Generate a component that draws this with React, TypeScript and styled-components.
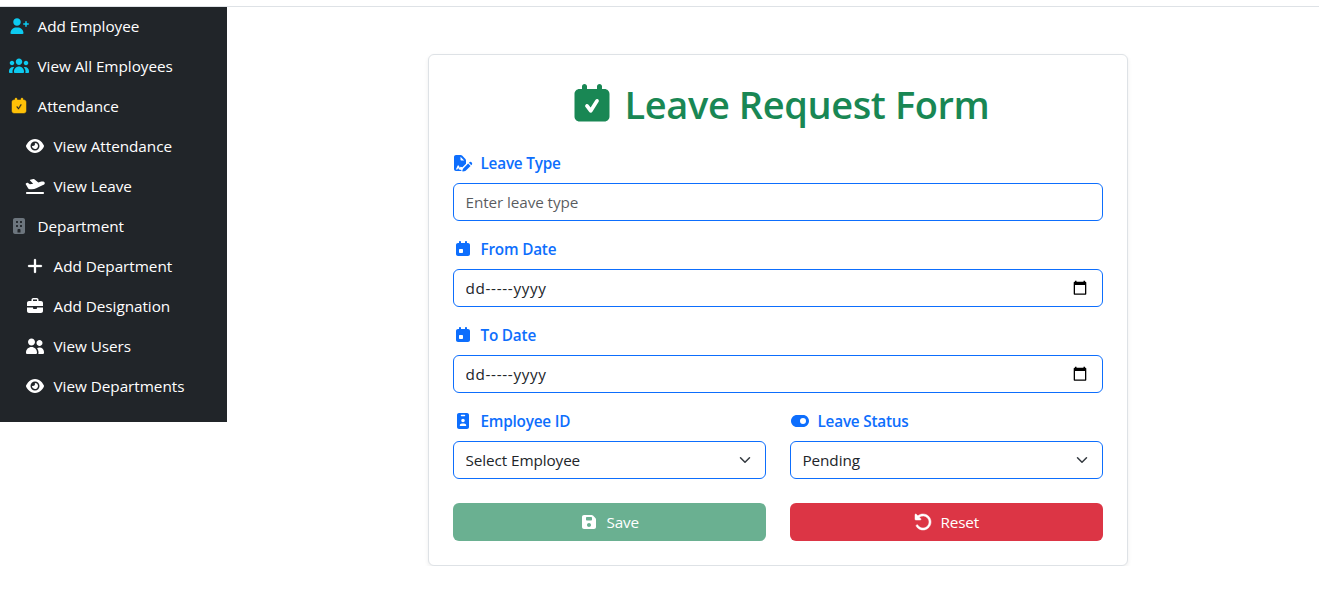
import React from "react";
import styled, { createGlobalStyle } from "styled-components";
import { FaToggleOn } from "react-icons/fa6";

const GlobalStyle = createGlobalStyle`
  *, *::before, *::after { box-sizing: border-box; }
  body {
    margin: 0;
    background: #fff;
    color: #212529;
    font-family: "Open Sans", "Noto Sans", sans-serif;
    font-size: 15.3px;
    line-height: 24px;
    letter-spacing: -0.1px;
  }
`;

const paths = {
  userPlus:
    "M136 192C136 125.7 189.7 72 256 72C322.3 72 376 125.7 376 192C376 258.3 322.3 312 256 312C189.7 312 136 258.3 136 192zM48 546.3C48 447.8 127.8 368 226.3 368L285.7 368C384.2 368 464 447.8 464 546.3C464 562.7 450.7 576 434.3 576L77.7 576C61.3 576 48 562.7 48 546.3zM544 160C557.3 160 568 170.7 568 184L568 232L616 232C629.3 232 640 242.7 640 256C640 269.3 629.3 280 616 280L568 280L568 328C568 341.3 557.3 352 544 352C530.7 352 520 341.3 520 328L520 280L472 280C458.7 280 448 269.3 448 256C448 242.7 458.7 232 472 232L520 232L520 184C520 170.7 530.7 160 544 160z",
  users:
    "M320 80C377.4 80 424 126.6 424 184C424 241.4 377.4 288 320 288C262.6 288 216 241.4 216 184C216 126.6 262.6 80 320 80zM96 152C135.8 152 168 184.2 168 224C168 263.8 135.8 296 96 296C56.2 296 24 263.8 24 224C24 184.2 56.2 152 96 152zM0 480C0 409.3 57.3 352 128 352C140.8 352 153.2 353.9 164.9 357.4C132 394.2 112 442.8 112 496L112 512C112 523.4 114.4 534.2 118.7 544L32 544C14.3 544 0 529.7 0 512L0 480zM521.3 544C525.6 534.2 528 523.4 528 512L528 496C528 442.8 508 394.2 475.1 357.4C486.8 353.9 499.2 352 512 352C582.7 352 640 409.3 640 480L640 512C640 529.7 625.7 544 608 544L521.3 544zM472 224C472 184.2 504.2 152 544 152C583.8 152 616 184.2 616 224C616 263.8 583.8 296 544 296C504.2 296 472 263.8 472 224zM160 496C160 407.6 231.6 336 320 336C408.4 336 480 407.6 480 496L480 512C480 529.7 465.7 544 448 544L192 544C174.3 544 160 529.7 160 512L160 496z",
  calendarCheck:
    "M224 64C241.7 64 256 78.3 256 96L256 128L384 128L384 96C384 78.3 398.3 64 416 64C433.7 64 448 78.3 448 96L448 128L480 128C515.3 128 544 156.7 544 192L544 480C544 515.3 515.3 544 480 544L160 544C124.7 544 96 515.3 96 480L96 192C96 156.7 124.7 128 160 128L192 128L192 96C192 78.3 206.3 64 224 64zM404.4 292.7C411.5 281.5 408.1 266.8 396.8 259.7C385.5 252.6 370.7 256.1 363.7 267.3L302.3 365.6L275.3 329.6C267.3 319 252.3 316.8 241.7 324.8C231.1 332.8 228.9 347.8 236.9 358.4L284.9 422.4C289.6 428.8 297.2 432.4 305.1 432C313 431.6 320.2 427.4 324.4 420.7L404.4 292.7z",
  calendarDay:
    "M224 64C241.7 64 256 78.3 256 96L256 128L384 128L384 96C384 78.3 398.3 64 416 64C433.7 64 448 78.3 448 96L448 128L480 128C515.3 128 544 156.7 544 192L544 480C544 515.3 515.3 544 480 544L160 544C124.7 544 96 515.3 96 480L96 192C96 156.7 124.7 128 160 128L192 128L192 96C192 78.3 206.3 64 224 64zM224 320C206.3 320 192 334.3 192 352L192 416C192 433.7 206.3 448 224 448L288 448C305.7 448 320 433.7 320 416L320 352C320 334.3 305.7 320 288 320L224 320z",
  eye:
    "M320 96C239.2 96 174.5 132.8 127.4 176.6C80.6 220.1 49.3 272 34.4 307.7C31.1 315.6 31.1 324.4 34.4 332.3C49.3 368 80.6 420 127.4 463.4C174.5 507.1 239.2 544 320 544C400.8 544 465.5 507.2 512.6 463.4C559.4 419.9 590.7 368 605.6 332.3C608.9 324.4 608.9 315.6 605.6 307.7C590.7 272 559.4 220 512.6 176.6C465.5 132.9 400.8 96 320 96zM176 320C176 240.5 240.5 176 320 176C399.5 176 464 240.5 464 320C464 399.5 399.5 464 320 464C240.5 464 176 399.5 176 320zM320 256C320 291.3 291.3 320 256 320C244.5 320 233.7 317 224.3 311.6C223.3 322.5 224.2 333.7 227.2 344.8C240.9 396 293.6 426.4 344.8 412.7C396 399 426.4 346.3 412.7 295.1C400.5 249.4 357.2 220.3 311.6 224.3C316.9 233.6 320 244.4 320 256z",
  planeDeparture:
    "M170 116L262 94C276 91 288 94 300 103L426 204L500 182C560 164 622 170 632 214C640 250 612 274 576 290L360 392C320 410 270 420 220 420L150 420C132 420 116 412 104 398L24 262C16 248 22 236 36 230L70 216C80 212 90 214 98 220L156 266L262 246L160 142C152 134 156 120 170 116zM64 512L576 512C594 512 608 526 608 544C608 562 594 576 576 576L64 576C46 576 32 562 32 544C32 526 46 512 64 512z",
  building:
    "M192 64C156.7 64 128 92.7 128 128L128 512C128 547.3 156.7 576 192 576L448 576C483.3 576 512 547.3 512 512L512 128C512 92.7 483.3 64 448 64L192 64zM304 416L336 416C353.7 416 368 430.3 368 448L368 528L272 528L272 448C272 430.3 286.3 416 304 416zM224 176C224 167.2 231.2 160 240 160L272 160C280.8 160 288 167.2 288 176L288 208C288 216.8 280.8 224 272 224L240 224C231.2 224 224 216.8 224 208L224 176zM368 160L400 160C408.8 160 416 167.2 416 176L416 208C416 216.8 408.8 224 400 224L368 224C359.2 224 352 216.8 352 208L352 176C352 167.2 359.2 160 368 160zM224 304C224 295.2 231.2 288 240 288L272 288C280.8 288 288 295.2 288 304L288 336C288 344.8 280.8 352 272 352L240 352C231.2 352 224 344.8 224 336L224 304zM368 288L400 288C408.8 288 416 295.2 416 304L416 336C416 344.8 408.8 352 400 352L368 352C359.2 352 352 344.8 352 336L352 304C352 295.2 359.2 288 368 288z",
  plus:
    "M352 128C352 110.3 337.7 96 320 96C302.3 96 288 110.3 288 128L288 288L128 288C110.3 288 96 302.3 96 320C96 337.7 110.3 352 128 352L288 352L288 512C288 529.7 302.3 544 320 544C337.7 544 352 529.7 352 512L352 352L512 352C529.7 352 544 337.7 544 320C544 302.3 529.7 288 512 288L352 288L352 128z",
  briefcase:
    "M264 112L376 112C380.4 112 384 115.6 384 120L384 160L256 160L256 120C256 115.6 259.6 112 264 112zM208 120L208 160L128 160C92.7 160 64 188.7 64 224L64 320L576 320L576 224C576 188.7 547.3 160 512 160L432 160L432 120C432 89.1 406.9 64 376 64L264 64C233.1 64 208 89.1 208 120zM576 368L384 368L384 384C384 401.7 369.7 416 352 416L288 416C270.3 416 256 401.7 256 384L256 368L64 368L64 480C64 515.3 92.7 544 128 544L512 544C547.3 544 576 515.3 576 480L576 368z",
  userGroup:
    "M96 192C96 130.1 146.1 80 208 80C269.9 80 320 130.1 320 192C320 253.9 269.9 304 208 304C146.1 304 96 253.9 96 192zM32 528C32 430.8 110.8 352 208 352C305.2 352 384 430.8 384 528L384 534C384 557.2 365.2 576 342 576L74 576C50.8 576 32 557.2 32 534L32 528zM464 128C517 128 560 171 560 224C560 277 517 320 464 320C411 320 368 277 368 224C368 171 411 128 464 128zM464 368C543.5 368 608 432.5 608 512L608 534.4C608 557.4 589.4 576 566.4 576L421.6 576C428.2 563.5 432 549.2 432 534L432 528C432 476.5 414.6 429.1 385.5 391.3C408.1 376.6 435.1 368 464 368z",
  fileSignature:
    "M96 64C60.700 64 32 92.700 32 128L32 512C32 547.300 60.700 576 96 576L262 576L272 540L190 528L168 476L140 528L92 528L150 400L188 400L214 472L246 440L300 456L416 340L416 234.500C416 217.500 409.300 201.200 397.300 189.200L290.700 82.700C278.700 70.700 262.500 64 245.500 64L96 64zM357.500 240L264 240C250.700 240 240 229.300 240 216L240 122.500zM336 484L484 336L562 414L414 562C408 568 400 572 392 574L318 590C304 592 294 582 297 568L314 522C318 508 326 494 336 484zM508 312L520 300C542 278 576 278 598 300C620 322 620 356 598 378L586 390z",
  idBadge:
    "M192 64C156.7 64 128 92.7 128 128L128 512C128 547.3 156.7 576 192 576L448 576C483.3 576 512 547.3 512 512L512 128C512 92.700 483.3 64 448 64L192 64zM272 120L368 120C381 120 392 131 392 144C392 157 381 168 368 168L272 168C259 168 248 157 248 144C248 131 259 120 272 120zM320 248C351 248 376 273 376 304C376 335 351 360 320 360C289 360 264 335 264 304C264 273 289 248 320 248zM216 464C216 424 248 396 288 396L352 396C392 396 424 424 424 464C424 473 417 480 408 480L232 480C223 480 216 473 216 464z",
  rotateLeft:
    "M88 256L232 256C241.7 256 250.5 250.2 254.2 241.2C257.9 232.2 255.9 221.9 249 215L202.3 168.3C277.6 109.7 386.6 115 455.8 184.2C530.8 259.2 530.8 380.7 455.8 455.7C380.8 530.7 259.3 530.7 184.3 455.7C174.1 445.5 165.3 434.4 157.9 422.7C148.4 407.8 128.6 403.4 113.7 412.9C98.8 422.4 94.4 442.2 103.9 457.1C113.7 472.7 125.4 487.5 139 501C239 601 401 601 501 501C601 401 601 239 501 139C406.8 44.7 257.3 39.3 156.7 122.8L105 71C98.1 64.2 87.8 62.1 78.8 65.8C69.8 69.5 64 78.3 64 88L64 232C64 245.3 74.7 256 88 256z",
  floppy:
    "M160 96C124.7 96 96 124.7 96 160L96 480C96 515.3 124.7 544 160 544L480 544C515.3 544 544 515.3 544 480L544 237.3C544 220.3 537.3 204 525.3 192L448 114.7C436 102.7 419.7 96 402.7 96L160 96zM224 192C224 174.3 238.3 160 256 160L384 160C401.7 160 416 174.3 416 192L416 240C416 257.7 401.7 272 384 272L256 272C238.3 272 224 257.7 224 240L224 192zM320 352C355.3 352 384 380.7 384 416C384 451.3 355.3 480 320 480C284.7 480 256 451.3 256 416C256 380.7 284.7 352 320 352z",
};

const IconBox = styled.span<{ $color?: string }>`
  display: inline-flex;
  flex: none;
  align-items: center;
  justify-content: center;
  width: 20px;
  height: 20px;
  margin-right: 7.5px;
  color: ${(p) => p.$color ?? "inherit"};
  svg { display: block; flex: none; }
`;

type GlyphProps = { name: keyof typeof paths; size?: number; weight?: number };

const Glyph = ({ name, size = 20, weight = 0 }: GlyphProps) => (
  <svg
    width={size}
    height={size}
    viewBox="0 0 640 640"
    fill="currentColor"
    fillRule="evenodd"
    stroke={weight ? "currentColor" : "none"}
    strokeWidth={weight}
    aria-hidden="true"
  >
    <path d={paths[name]} />
  </svg>
);

const Page = styled.div`
  border-top: 1px solid #dee2e6;
  margin-top: 6px;
  display: flex;
  align-items: flex-start;
`;

const Sidebar = styled.nav`
  flex: none;
  width: 227px;
  height: 415px;
  background: #212529;
  color: #fff;
`;

const NavLink = styled.a<{ $nested?: boolean }>`
  display: flex;
  align-items: center;
  height: 40px;
  padding: 0 0 2px ${(p) => (p.$nested ? 25 : 9)}px;
  color: #fff;
  letter-spacing: -0.04px;
  text-decoration: none;
  ${IconBox} { margin-right: 8.5px; }
`;

const Main = styled.main`
  flex: 1;
  display: flex;
  justify-content: center;
  padding: 47px 0 0 10px;
`;

const Card = styled.form`
  width: 700px;
  padding: 24px;
  border: 1px solid #dee2e6;
  border-radius: 6px;
  background: #fff;
  box-shadow: 0 2px 4px rgba(0, 0, 0, 0.075);
`;

const Title = styled.h1`
  display: flex;
  align-items: center;
  justify-content: center;
  height: 48px;
  margin: 0 0 24px;
  padding-top: 2px;
  color: #198754;
  font-size: 38px;
  font-weight: 600;
  letter-spacing: -0.4px;
  line-height: 48px;
  svg { flex: none; margin-right: 8px; }
`;

const Field = styled.div`
  margin-bottom: 16px;
`;

const Label = styled.label`
  display: flex;
  align-items: center;
  height: 24px;
  margin-bottom: 8px;
  color: #0d6efd;
  font-weight: 600;
  letter-spacing: -0.2px;
`;

const Control = styled.div`
  display: flex;
  align-items: center;
  height: 38px;
  padding: 0 15px 0 11.5px;
  border: 1px solid #0d6efd;
  border-radius: 6px;
  > svg { flex: none; }
`;

const SelectControl = styled(Control)`
  padding-right: 14px;
`;

const Input = styled.input<{ $tracking?: string }>`
  flex: 1;
  min-width: 0;
  padding: 0;
  border: 0;
  outline: 0;
  background: transparent;
  color: #212529;
  font: inherit;
  letter-spacing: ${(p) => p.$tracking ?? "inherit"};
  &::placeholder { color: rgba(33, 37, 41, 0.75); opacity: 1; }
`;

const Select = styled.select`
  flex: 1;
  min-width: 0;
  padding: 0;
  border: 0;
  outline: 0;
  appearance: none;
  background: transparent;
  color: #212529;
  font: inherit;
  letter-spacing: inherit;
`;

const Columns = styled.div`
  display: grid;
  grid-template-columns: 1fr 1fr;
  column-gap: 24px;
`;

const Buttons = styled(Columns)`
  margin-top: 8px;
`;

const Button = styled.button<{ $bg: string }>`
  display: flex;
  align-items: center;
  justify-content: center;
  height: 38px;
  padding: 0 1px 0 0;
  border: 0;
  border-radius: 6px;
  background: ${(p) => p.$bg};
  color: #fff;
  font: inherit;
  letter-spacing: -0.2px;
`;

const Chevron = () => (
  <svg width="12" height="16" viewBox="0 0 16 16" fill="none" stroke="#343a40" strokeWidth="2" strokeLinecap="round" strokeLinejoin="round">
    <path d="m2 5 6 6 6-6" />
  </svg>
);

const DatePickerIcon = () => (
  <svg width="14" height="16" viewBox="0 0 14 16" fill="#000">
    <path fillRule="evenodd" d="M2 .7h1.500v1h7v-1H12v1h.3c.6 0 1 .4 1 1v11c0 .6-.4 1-1 1H1.700c-.6 0-1-.4-1-1v-11c0-.6.4-1 1-1H2zM2 5v8.400h10V5z" />
  </svg>
);

const DateField = ({ label, id }: { label: string; id: string }) => (
  <Field>
    <Label htmlFor={id}><IconBox><Glyph name="calendarDay" /></IconBox>{label}</Label>
    <Control>
      <Input id={id} defaultValue="dd-----yyyy" $tracking="0.65px" />
      <DatePickerIcon />
    </Control>
  </Field>
);

const links: { text: string; icon: React.ReactNode; color?: string; nested?: boolean }[] = [
  { text: "Add Employee", icon: <Glyph name="userPlus" />, color: "#0dcaf0" },
  { text: "View All Employees", icon: <Glyph name="users" />, color: "#0dcaf0" },
  { text: "Attendance", icon: <Glyph name="calendarCheck" weight={16} />, color: "#ffc107" },
  { text: "View Attendance", icon: <Glyph name="eye" />, nested: true },
  { text: "View Leave", icon: <Glyph name="planeDeparture" />, nested: true },
  { text: "Department", icon: <Glyph name="building" />, color: "#6c757d" },
  { text: "Add Department", icon: <Glyph name="plus" weight={10} />, nested: true },
  { text: "Add Designation", icon: <Glyph name="briefcase" />, nested: true },
  { text: "View Users", icon: <Glyph name="userGroup" />, nested: true },
  { text: "View Departments", icon: <Glyph name="eye" />, nested: true },
];

export default function App() {
  return (
    <>
      <GlobalStyle />
      <Page>
        <Sidebar>
          {links.map((l) => (
            <NavLink key={l.text} $nested={l.nested}>
              <IconBox $color={l.color}>{l.icon}</IconBox>
              {l.text}
            </NavLink>
          ))}
        </Sidebar>
        <Main>
          <Card>
            <Title><Glyph name="calendarCheck" size={50} />Leave Request Form</Title>
            <Field>
              <Label htmlFor="type"><IconBox><Glyph name="fileSignature" /></IconBox>Leave Type</Label>
              <Control><Input id="type" placeholder="Enter leave type" /></Control>
            </Field>
            <DateField id="from" label="From Date" />
            <DateField id="to" label="To Date" />
            <Columns>
              <Field>
                <Label htmlFor="employee"><IconBox><Glyph name="idBadge" /></IconBox>Employee ID</Label>
                <SelectControl>
                  <Select id="employee"><option>Select Employee</option></Select>
                  <Chevron />
                </SelectControl>
              </Field>
              <Field>
                <Label htmlFor="status"><IconBox><FaToggleOn size={18} /></IconBox>Leave Status</Label>
                <SelectControl>
                  <Select id="status"><option>Pending</option></Select>
                  <Chevron />
                </SelectControl>
              </Field>
            </Columns>
            <Buttons>
              <Button type="button" $bg="#6ab091"><IconBox><Glyph name="floppy" /></IconBox>Save</Button>
              <Button type="button" $bg="#dc3545"><IconBox><Glyph name="rotateLeft" weight={16} /></IconBox>Reset</Button>
            </Buttons>
          </Card>
        </Main>
      </Page>
    </>
  );
}
